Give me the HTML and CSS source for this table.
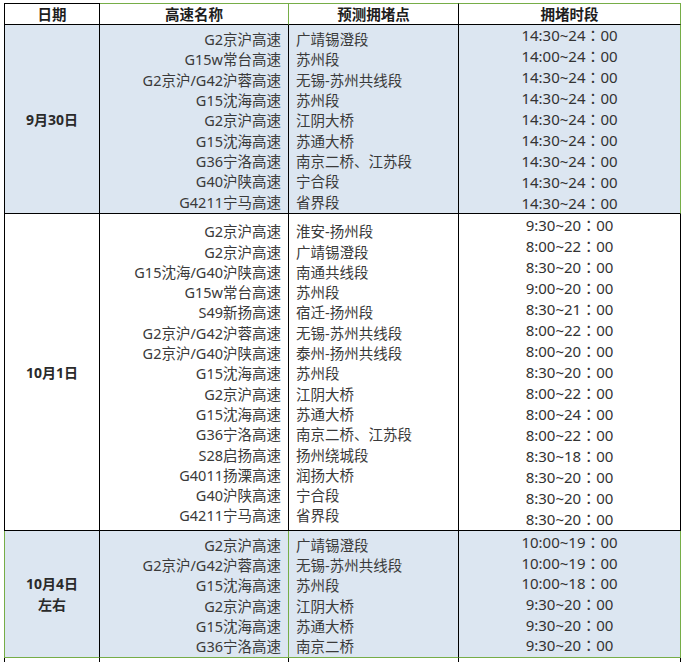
FILE: index.html
```html
<!DOCTYPE html>
<html lang="zh-CN">
<head>
<meta charset="utf-8">
<title>高速拥堵预测</title>
<link rel="stylesheet" href="styles.css">
</head>
<body>
<div class="sheet">
  <div class="c hd date">日期</div>
  <div class="c hd name g-top g-right">高速名称</div>
  <div class="c hd point g-top">预测拥堵点</div>
  <div class="c hd time g-top g-right">拥堵时段</div>

  <div class="c date blue bold">9月30日</div>
  <div class="c name blue">G2京沪高速<br>G15w常台高速<br>G2京沪/G42沪蓉高速<br>G15沈海高速<br>G2京沪高速<br>G15沈海高速<br>G36宁洛高速<br>G40沪陕高速<br>G4211宁马高速</div>
  <div class="c point blue">广靖锡澄段<br>苏州段<br>无锡-苏州共线段<br>苏州段<br>江阴大桥<br>苏通大桥<br>南京二桥、江苏段<br>宁合段<br>省界段</div>
  <div class="c time blue g-right">14:30~24：00<br>14:00~24：00<br>14:30~24：00<br>14:30~24：00<br>14:30~24：00<br>14:30~24：00<br>14:30~24：00<br>14:30~24：00<br>14:30~24：00</div>

  <div class="c date bold">10月1日</div>
  <div class="c name">G2京沪高速<br>G2京沪高速<br>G15沈海/G40沪陕高速<br>G15w常台高速<br>S49新扬高速<br>G2京沪/G42沪蓉高速<br>G2京沪/G40沪陕高速<br>G15沈海高速<br>G2京沪高速<br>G15沈海高速<br>G36宁洛高速<br>S28启扬高速<br>G4011扬溧高速<br>G40沪陕高速<br>G4211宁马高速</div>
  <div class="c point">淮安-扬州段<br>广靖锡澄段<br>南通共线段<br>苏州段<br>宿迁-扬州段<br>无锡-苏州共线段<br>泰州-扬州共线段<br>苏州段<br>江阴大桥<br>苏通大桥<br>南京二桥、江苏段<br>扬州绕城段<br>润扬大桥<br>宁合段<br>省界段</div>
  <div class="c time">9:30~20：00<br>8:00~22：00<br>8:30~20：00<br>9:00~20：00<br>8:30~21：00<br>8:00~22：00<br>8:00~20：00<br>8:30~20：00<br>8:00~22：00<br>8:00~24：00<br>8:00~22：00<br>8:30~18：00<br>8:30~20：00<br>8:30~20：00<br>8:30~20：00</div>

  <div class="c date blue bold g-left g-bottom">10月4日<br>左右</div>
  <div class="c name blue g-right g-bottom">G2京沪高速<br>G2京沪/G42沪蓉高速<br>G15沈海高速<br>G2京沪高速<br>G15沈海高速<br>G36宁洛高速</div>
  <div class="c point blue g-bottom">广靖锡澄段<br>无锡-苏州共线段<br>苏州段<br>江阴大桥<br>苏通大桥<br>南京二桥</div>
  <div class="c time blue g-right g-bottom t3">10:00~19：00<br>10:00~19：00<br>10:00~18：00<br>9:30~20：00<br>9:30~20：00<br>9:30~20：00</div>

  <div class="c date"></div>
  <div class="c name"></div>
  <div class="c point"></div>
  <div class="c time"></div>
</div>
</body>
</html>
```

FILE: styles.css
```css
html, body {
  margin: 0;
  padding: 0;
  background: #ffffff;
}

body {
  padding: 3px 0 0 4px;
  font-family: "Noto Sans", "Noto Sans CJK SC", sans-serif;
  font-size: 14.5px;
  color: #3a3a3a;
}

.sheet {
  display: grid;
  grid-template-columns: 96px 189px 170px 222px;
  grid-template-rows: 22px 189px 317px 127px 20px;
}

.c {
  box-sizing: border-box;
  border-right: 1px solid #000;
  border-bottom: 1px solid #000;
  display: flex;
  flex-direction: column;
  justify-content: center;
  white-space: nowrap;
  overflow: hidden;
}

.date {
  border-left: 1px solid #000;
  align-items: center;
  text-align: center;
  line-height: 21px;
  font-size: 14px;
}

.name {
  align-items: flex-end;
  text-align: right;
  padding-right: 7px;
  line-height: 20.3px;
  padding-top: 3px;
}

.point {
  align-items: flex-start;
  text-align: left;
  padding-left: 7px;
  line-height: 20.3px;
  padding-top: 3px;
}

.time {
  align-items: center;
  text-align: center;
  line-height: 21px;
  color: #333;
  font-family: "Noto Sans", "Noto Sans CJK TC", sans-serif;
  font-size: 15px;
}

.t3 {
  line-height: 20.6px;
}

.hd {
  border-top: 1px solid #000;
  font-weight: bold;
  font-family: "Noto Sans", "Noto Sans CJK SC", sans-serif;
  font-size: 14.5px;
  color: #1e1e1e;
  line-height: 20px;
  padding-top: 0;
  padding-left: 0;
  padding-right: 0;
  align-items: center;
  text-align: center;
}

.bold {
  font-weight: bold;
  color: #2a2a2a;
}

.blue {
  background: #dce6f1;
}

.g-top { border-top-color: #76ad47; }
.g-right { border-right-color: #76ad47; }
.g-left { border-left-color: #76ad47; }
.g-bottom { border-bottom-color: #76ad47; }
```
